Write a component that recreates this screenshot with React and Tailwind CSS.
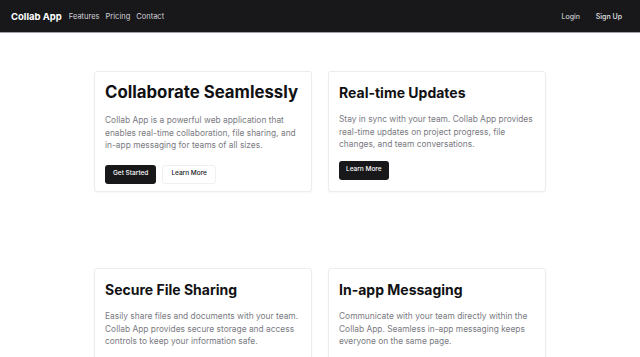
import React from 'react';

const features = [
  {
    id: 1,
    title: 'Collaborate Seamlessly',
    big: true,
    text: 'Collab App is a powerful web application that enables real-time collaboration, file sharing, and in-app messaging for teams of all sizes.',
    actions: ['Get Started', 'Learn More'],
  },
  {
    id: 2,
    title: 'Real-time Updates',
    text: 'Stay in sync with your team. Collab App provides real-time updates on project progress, file changes, and team conversations.',
    actions: ['Learn More'],
  },
  {
    id: 3,
    title: 'Secure File Sharing',
    text: 'Easily share files and documents with your team. Collab App provides secure storage and access controls to keep your information safe.',
    actions: ['Learn More'],
  },
  {
    id: 4,
    title: 'In-app Messaging',
    text: 'Communicate with your team directly within the Collab App. Seamless in-app messaging keeps everyone on the same page.',
    actions: ['Learn More'],
  },
];

const Card = ({ item }) => (
  <div className="bg-white border border-[#ececee] rounded-[3px] shadow-[0_1px_2px_rgba(0,0,0,0.04)] pl-[10px] pr-[12px] pt-[8px] pb-[10px] h-[121px]">
    {item.big ? (
      <h2 className="text-[16.8px] leading-[24px] font-bold text-[#111113]">{item.title}</h2>
    ) : (
      <h2 className="text-[14px] leading-[22px] font-bold text-[#111113] mt-[2px]">{item.title}</h2>
    )}
    <p className={`text-[8.4px] leading-[12.5px] text-[#7a7a82] ${item.big ? 'mt-[10px]' : 'mt-[9px]'}`}>{item.text}</p>
    <div className={`flex gap-[6px] ${item.big ? 'mt-[13px]' : 'mt-[10px]'}`}>
      {item.actions.map((a, i) =>
        i === 0 && item.actions.length > 1 ? (
          <button key={a} className="h-[19px] px-[8px] rounded-[3px] bg-[#18181b] text-white text-[6.5px] font-medium">{a}</button>
        ) : item.actions.length === 1 ? (
          <button key={a} className="h-[19px] px-[7px] rounded-[3px] bg-[#18181b] text-white text-[6.5px] font-medium">{a}</button>
        ) : (
          <button key={a} className="h-[19px] px-[8px] rounded-[3px] bg-white border border-[#f0f0f2] text-[#18181b] text-[6.5px] font-medium">{a}</button>
        )
      )}
    </div>
  </div>
);

const App = () => (
  <div className="min-h-[357px] bg-white font-['Inter',sans-serif]">
    <header className="h-[33px] bg-[#18181b] border-b border-[#a1a1aa] flex items-center justify-between px-[11px] pt-[2px]">
      <div className="flex items-center gap-[7px]">
        <span className="text-[9.5px] font-bold text-white">Collab App</span>
        <nav className="flex gap-[6px] text-[7.5px] text-[#d4d4d8]">
          <span>Features</span>
          <span>Pricing</span>
          <span>Contact</span>
        </nav>
      </div>
      <div className="flex items-center gap-[16px] pr-[7px] text-[7px] text-[#e4e4e7]">
        <span>Login</span>
        <span className="font-medium">Sign Up</span>
      </div>
    </header>
    <main className="w-[452px] mx-auto pt-[38px] grid grid-cols-2 gap-x-[16px] gap-y-[76px]">
      {features.map((f) => (
        <Card key={f.id} item={f} />
      ))}
    </main>
  </div>
);

export default App;
